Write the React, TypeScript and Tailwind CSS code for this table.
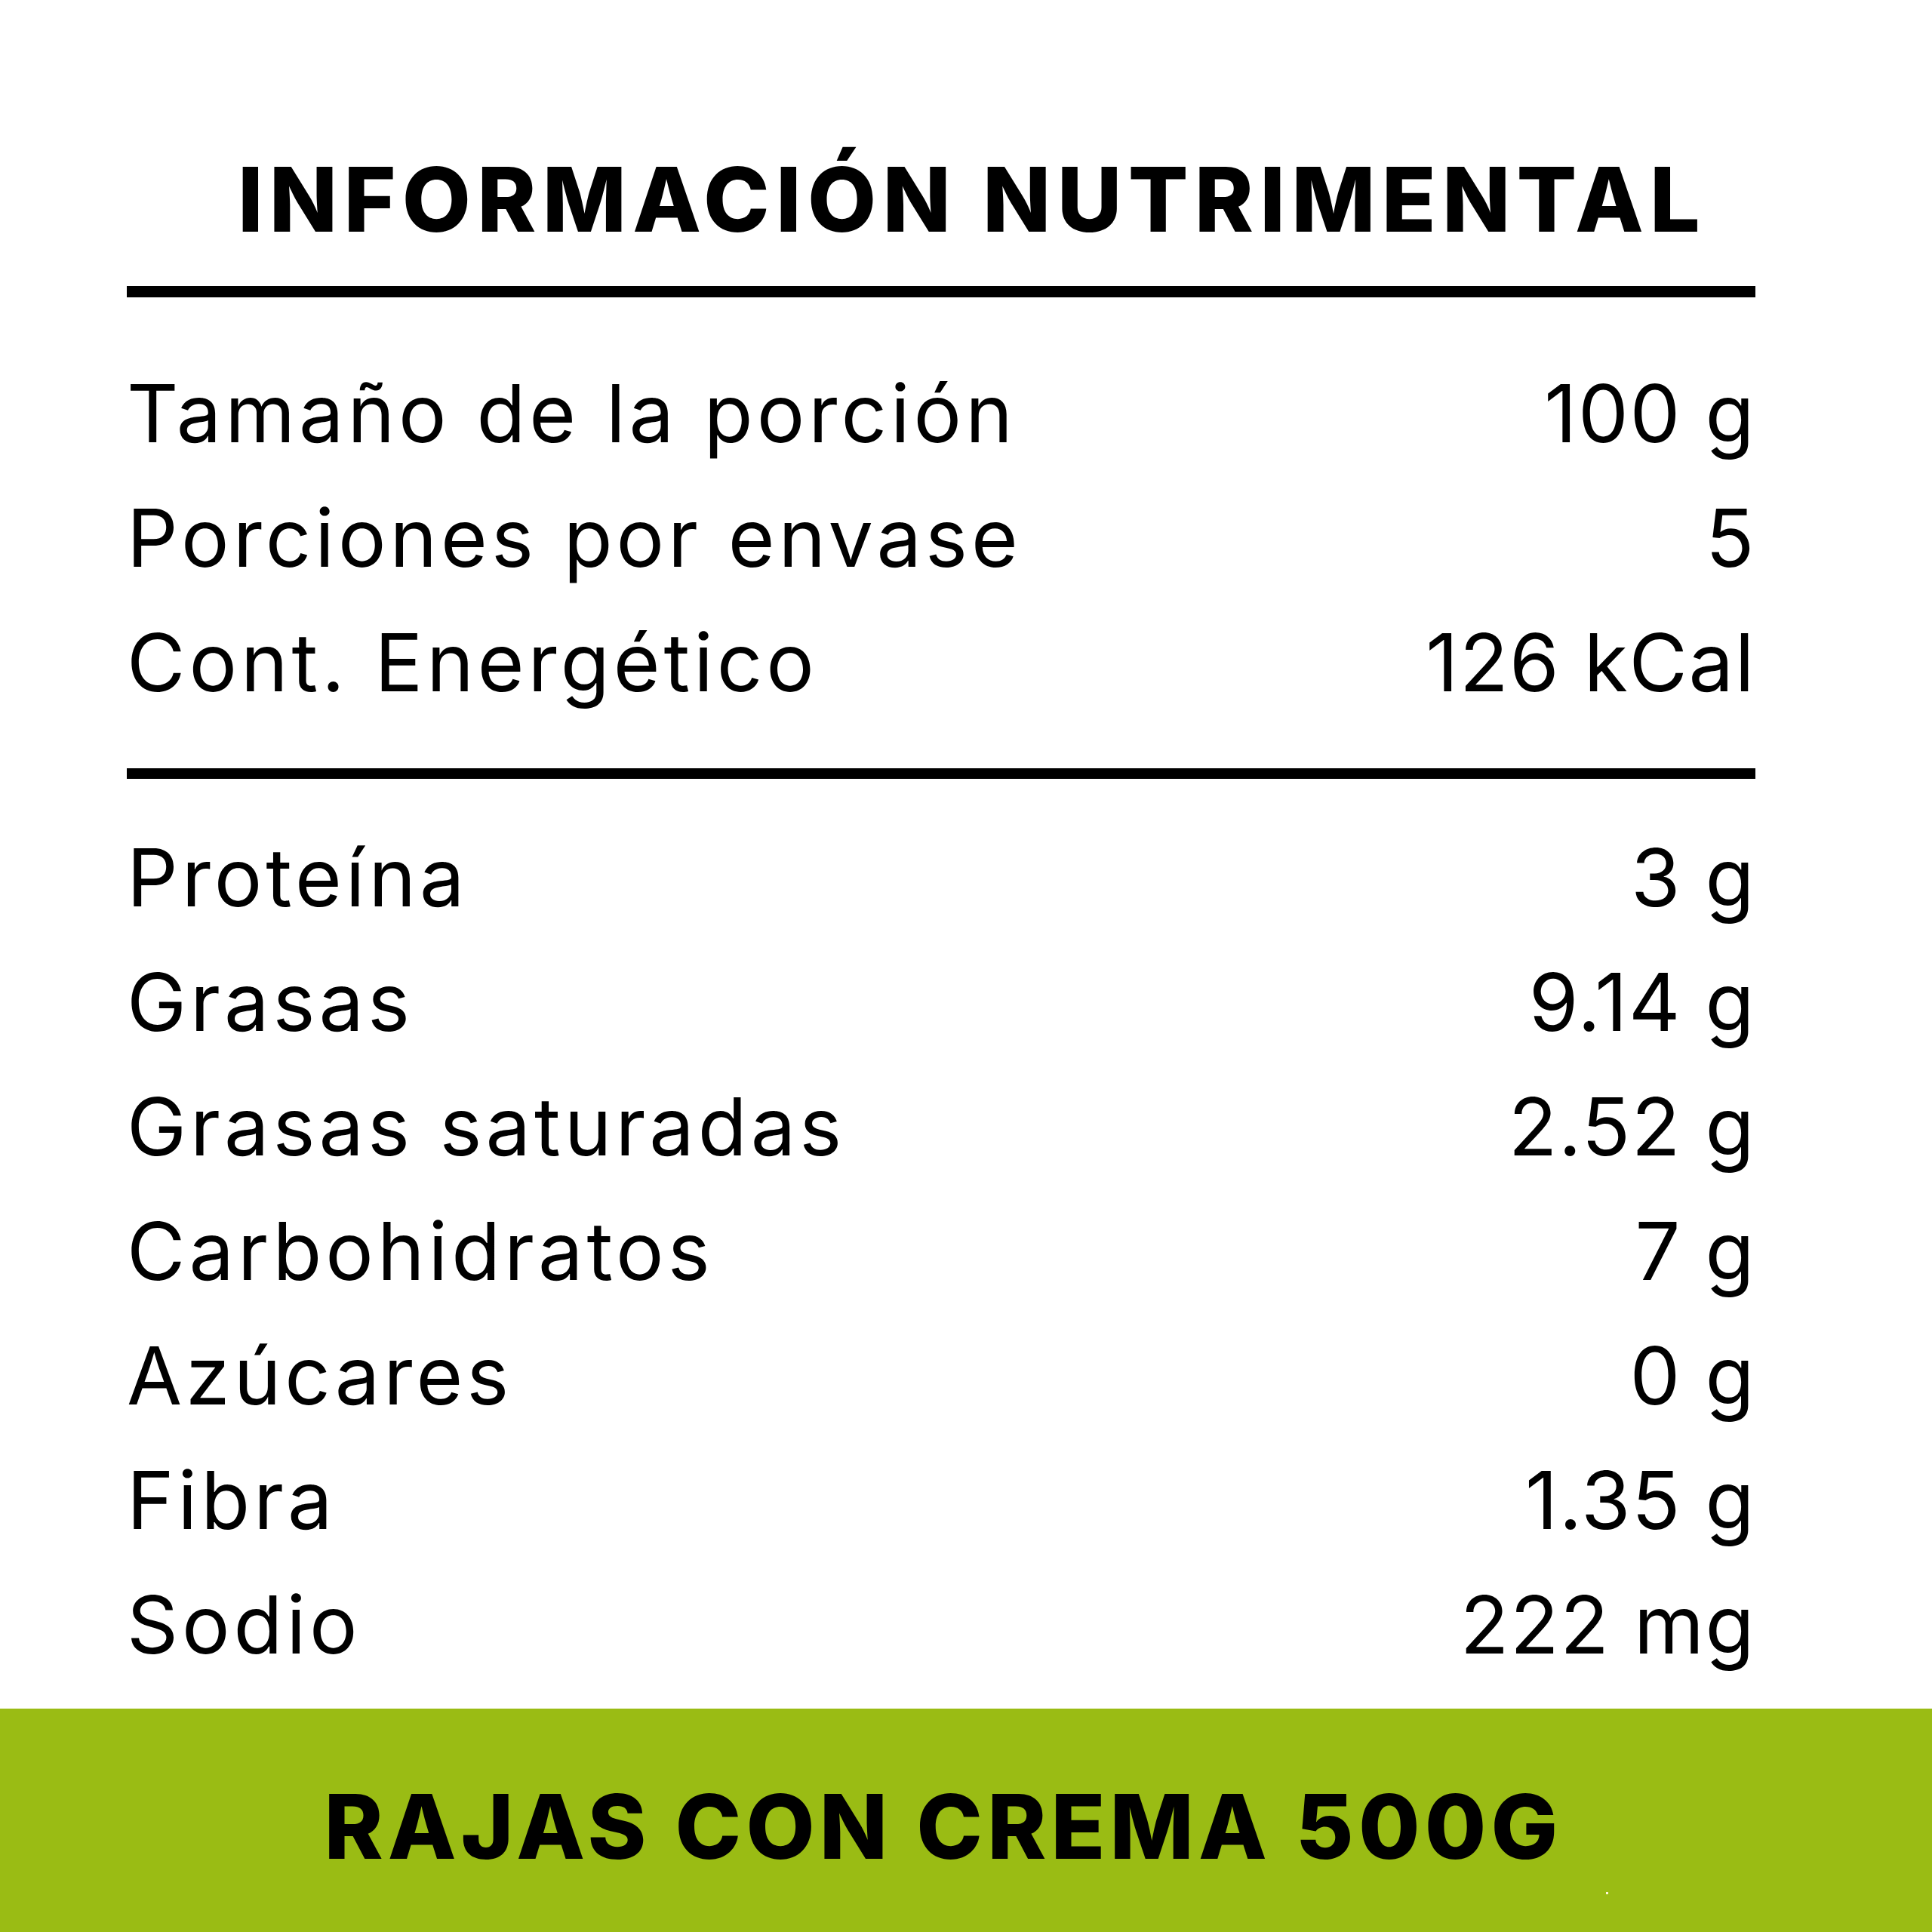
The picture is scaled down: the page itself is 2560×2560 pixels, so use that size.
const FONT = "font-['Inter',_'Noto_Sans',_sans-serif]";

type Row = { label: string; value: string };

const general: Row[] = [
  { label: "Tamaño de la porción", value: "100 g" },
  { label: "Porciones por envase", value: "5" },
  { label: "Cont. Energético", value: "126 kCal" },
];

const nutrients: Row[] = [
  { label: "Proteína", value: "3 g" },
  { label: "Grasas", value: "9.14 g" },
  { label: "Grasas saturadas", value: "2.52 g" },
  { label: "Carbohidratos", value: "7 g" },
  { label: "Azúcares", value: "0 g" },
  { label: "Fibra", value: "1.35 g" },
  { label: "Sodio", value: "222 mg" },
];

function NutritionRow({ label, value }: Row) {
  return (
    <div className="flex h-[165px] items-center justify-between text-[106px] leading-[165px] font-normal text-black">
      <span className="tracking-[0.047em]">{label}</span>
      <span className="tracking-[0.015em]">{value}</span>
    </div>
  );
}

export default function App() {
  return (
    <div className={`${FONT} relative flex h-[2560px] w-[2560px] flex-col bg-white`}>
      <h1 className="mt-[205px] pl-[16px] text-center text-[118px] font-extrabold leading-[118px] tracking-[0.07em] text-black">
        INFORMACIÓN NUTRIMENTAL
      </h1>
      <div className="flex flex-col pl-[168px] pr-[234px]">
        <div className="mt-[56px] h-[15px] bg-black" />
        <div className="mt-[71px] flex flex-col">
          {general.map((row) => (
            <NutritionRow key={row.label} {...row} />
          ))}
        </div>
        <div className="mt-[58px] h-[14px] bg-black" />
        <div className="mt-[48px] flex flex-col">
          {nutrients.map((row) => (
            <NutritionRow key={row.label} {...row} />
          ))}
        </div>
      </div>
      <div className="mt-auto flex h-[296px] flex-col bg-[#9abc14] pl-[168px] pr-[234px]">
        <p className="mt-[97px] pl-[6px] text-center text-[118px] font-extrabold leading-[118px] tracking-[0.052em] text-black">
          RAJAS CON CREMA 500G
        </p>
        <div className="relative flex-1">
          <span className="absolute left-[1960px] top-[28px] h-[3px] w-[3px] bg-[#fff6d8]" />
        </div>
      </div>
    </div>
  );
}
